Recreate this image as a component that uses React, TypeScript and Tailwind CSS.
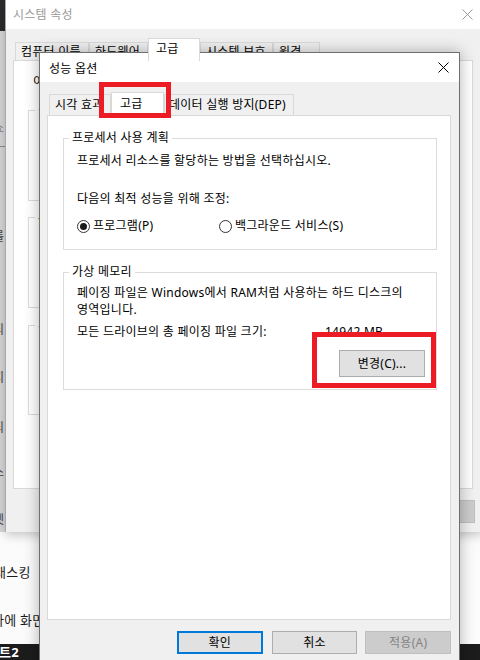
import React from 'react';

function CloseIcon({ className }: { className?: string }) {
  return (
    <svg width="11" height="11" viewBox="0 0 11 11" className={className}>
      <path d="M0.5 0.5L10.5 10.5M10.5 0.5L0.5 10.5" stroke="currentColor" strokeWidth="1" fill="none" />
    </svg>
  );
}

function Radio({ checked, label, className }: { checked?: boolean; label: string; className?: string }) {
  return (
    <label className={`flex items-center gap-[3px] ${className ?? ''}`}>
      <span className="w-[13px] h-[13px] rounded-full border border-[#333333] bg-white flex items-center justify-center">
        {checked && <span className="w-[7px] h-[7px] rounded-full bg-[#1a1a1a]" />}
      </span>
      <span>{label}</span>
    </label>
  );
}

// the system properties window sitting behind
function SystemProperties() {
  const tabs = [
    { label: '컴퓨터 이름', w: 'w-[74px]' },
    { label: '하드웨어', w: 'w-[59px]' },
    { label: '고급', w: 'w-[52px]', active: true },
    { label: '시스템 보호', w: 'w-[73px]' },
    { label: '원격', w: 'w-[47px]' },
  ];
  const groups = [
    { label: '성능', cls: 'mt-[12px] h-[99px]' },
    { label: '사용자 프로필', cls: 'mt-[8px] h-[99px]' },
    { label: '시작 및 복구', cls: 'mt-[9px] h-[98px]' },
  ];

  return (
    <div className="absolute left-[5px] top-0 w-[478px] h-[532px] bg-[#f0f0f0] border-l border-[#a8a8a8] shadow-[0_3px_10px_rgba(0,0,0,0.22)] flex flex-col">
      <div className="h-[29px] shrink-0 bg-white flex items-center justify-between pl-[7px] pr-[10px] text-[#9a9a9a]">
        <span>시스템 속성</span>
        <CloseIcon />
      </div>
      <div className="pl-[7px] pr-[10px] pt-[9px] flex flex-col">
        <div className="h-[22px] pl-[2px] flex items-end">
          {tabs.map((t) =>
            t.active ? (
              <div key={t.label} className={`${t.w} h-[23px] -mb-px relative z-10 bg-white border border-b-0 border-[#d9d9d9] pl-[7px] leading-[20px]`}>
                {t.label}
              </div>
            ) : (
              <div key={t.label} className={`${t.w} h-[18px] border border-b-0 border-[#d9d9d9] pl-[5px] leading-[18px] whitespace-nowrap`}>
                {t.label}
              </div>
            )
          )}
        </div>
        <div className="h-[429px] bg-white border border-[#d9d9d9] flex flex-col">
          <div className="mt-[13px] pl-[19px] whitespace-nowrap">이 항목들을 변경하려면 Administrator로 로그온해야 합니다.</div>
          {groups.map((g) => (
            <fieldset key={g.label} className={`ml-[14px] mr-[14px] border border-[#dcdcdc] ${g.cls}`}>
              <legend className="ml-[6px] px-[3px] leading-[16px]">{g.label}</legend>
            </fieldset>
          ))}
        </div>
        <div className="mt-[11px] -mr-[2px] flex justify-end gap-[8px]">
          <button className="w-[86px] h-[23px] border border-[#adadad] bg-[#e1e1e1]">확인</button>
          <button className="w-[86px] h-[23px] border border-[#adadad] bg-[#e1e1e1]">취소</button>
          <button className="w-[86px] h-[23px] border border-[#bfbfbf] bg-[#cccccc] text-[#838383]">적용(A)</button>
        </div>
      </div>
    </div>
  );
}

function PerformanceOptions() {
  return (
    <div className="absolute left-[39px] top-[52px] w-[421px] h-[640px] border border-[#6f6f6f] bg-[#f0f0f0] shadow-[0_0_14px_rgba(0,0,0,0.3)] flex flex-col">
      <div className="h-[29px] shrink-0 bg-white flex items-center justify-between pl-[9px] pr-[10px]">
        <span className="pt-[3px]">성능 옵션</span>
        <CloseIcon />
      </div>

      <div className="pl-[7px] pr-[8px] pt-[10px] flex flex-col">
        {/* tabs */}
        <div className="h-[23px] pl-[2px] flex items-end">
          <div className="w-[62px] h-[21px] border border-b-0 border-[#d9d9d9] pl-[5px] leading-[20px] whitespace-nowrap">시각 효과</div>
          <div className="w-[53px] h-[24px] -mb-px relative z-10 bg-white border border-b-0 border-[#d9d9d9] pl-[8px] leading-[22px]">고급</div>
          <div className="w-[130px] h-[21px] border border-b-0 border-[#d9d9d9] pl-[4px] leading-[20px] whitespace-nowrap">데이터 실행 방지(DEP)</div>
        </div>

        {/* tab panel */}
        <div className="h-[505px] bg-white border border-[#d9d9d9] flex flex-col">
          <fieldset className="mt-[14px] ml-[15px] mr-[13px] border border-[#dcdcdc]">
            <legend className="ml-[5px] px-[3px] leading-[16px]">프로세서 사용 계획</legend>
            <div className="pl-[13px] pt-[7px] pb-[15px] flex flex-col">
              <div>프로세서 리소스를 할당하는 방법을 선택하십시오.</div>
              <div className="mt-[22px]">다음의 최적 성능을 위해 조정:</div>
              <div className="mt-[11px] h-[16px] flex items-center">
                <Radio checked label="프로그램(P)" className="w-[142px]" />
                <Radio label="백그라운드 서비스(S)" />
              </div>
            </div>
          </fieldset>

          <fieldset className="mt-[14px] ml-[15px] mr-[13px] border border-[#dcdcdc]">
            <legend className="ml-[5px] px-[3px] leading-[16px]">가상 메모리</legend>
            <div className="pl-[13px] pt-[4px] pb-[12px] flex flex-col">
              <p className="leading-[17px]">
                페이징 파일은 Windows에서 RAM처럼 사용하는 하드 디스크의
                <br />
                영역입니다.
              </p>
              <div className="mt-[6px] flex">
                <span className="w-[248px] whitespace-nowrap">모든 드라이브의 총 페이징 파일 크기:</span>
                <span>14942 MB</span>
              </div>
              <div className="mt-[10px] pr-[11px] flex justify-end">
                <button className="w-[86px] h-[27px] border border-[#adadad] bg-[#e1e1e1]">변경(C)...</button>
              </div>
            </div>
          </fieldset>
        </div>

        {/* dialog buttons */}
        <div className="mt-[11px] pl-[130px] flex">
          <button className="w-[86px] h-[23px] border-2 border-[#0078d7] bg-[#e1e1e1]">확인</button>
          <button className="ml-[9px] w-[86px] h-[23px] border border-[#adadad] bg-[#e1e1e1]">취소</button>
          <button className="ml-[8px] w-[86px] h-[23px] border border-[#bfbfbf] bg-[#cccccc] text-[#838383]">적용(A)</button>
        </div>
      </div>
    </div>
  );
}

export default function App() {
  return (
    <div className="relative w-[480px] h-[660px] overflow-hidden bg-[#fbfbfb] text-black text-[12px] leading-[16px] tracking-[0.25px] font-['Noto_Sans','Noto_Sans_CJK_KR',sans-serif]">
      {/* app underneath everything */}
      <div className="h-full flex flex-col">
        <div className="h-[532px] shrink-0 flex">
          <div className="w-[5px] flex flex-col overflow-hidden bg-[#d6d6d6] text-[#444444]">
            <div className="h-[31px] shrink-0 bg-[#2b2b2b]" />
            <div className="mt-[89px] ml-[-7px] whitespace-nowrap text-[#888888]">쇼</div>
            <div className="mt-[10px] h-px shrink-0 bg-[#8c8c8c]" />
            <div className="mt-[82px] ml-[-7px] whitespace-nowrap">를</div>
            <div className="mt-[77px] ml-[-7px] whitespace-nowrap">되</div>
            <div className="mt-[32px] ml-[-7px] whitespace-nowrap">지</div>
            <div className="mt-[34px] ml-[-7px] whitespace-nowrap">되</div>
            <div className="mt-[29px] ml-[-7px] whitespace-nowrap">스</div>
            <div className="mt-[31px] ml-[-7px] whitespace-nowrap">넷</div>
          </div>
        </div>
        <div className="flex-1 flex flex-col text-[13px] leading-[18px] text-[#1a1a1a]">
          <div className="mt-[31px] ml-[-6px] whitespace-nowrap">태스킹</div>
          <div className="mt-[30px] ml-[-8px] whitespace-nowrap">다에 화면</div>
        </div>
        <div className="h-[16px] shrink-0 bg-[#1c1c1c] text-white font-bold text-[13px] leading-[16px]">
          <span className="ml-[-1px]">트2</span>
        </div>
      </div>

      <SystemProperties />
      <PerformanceOptions />

      {/* red highlight boxes */}
      <div className="absolute left-[99px] top-[82px] w-[72px] h-[36px] border-[5px] border-[#ed1c24] z-50" />
      <div className="absolute left-[312px] top-[332px] w-[124px] h-[56px] border-[5px] border-[#ed1c24] z-50" />
    </div>
  );
}
